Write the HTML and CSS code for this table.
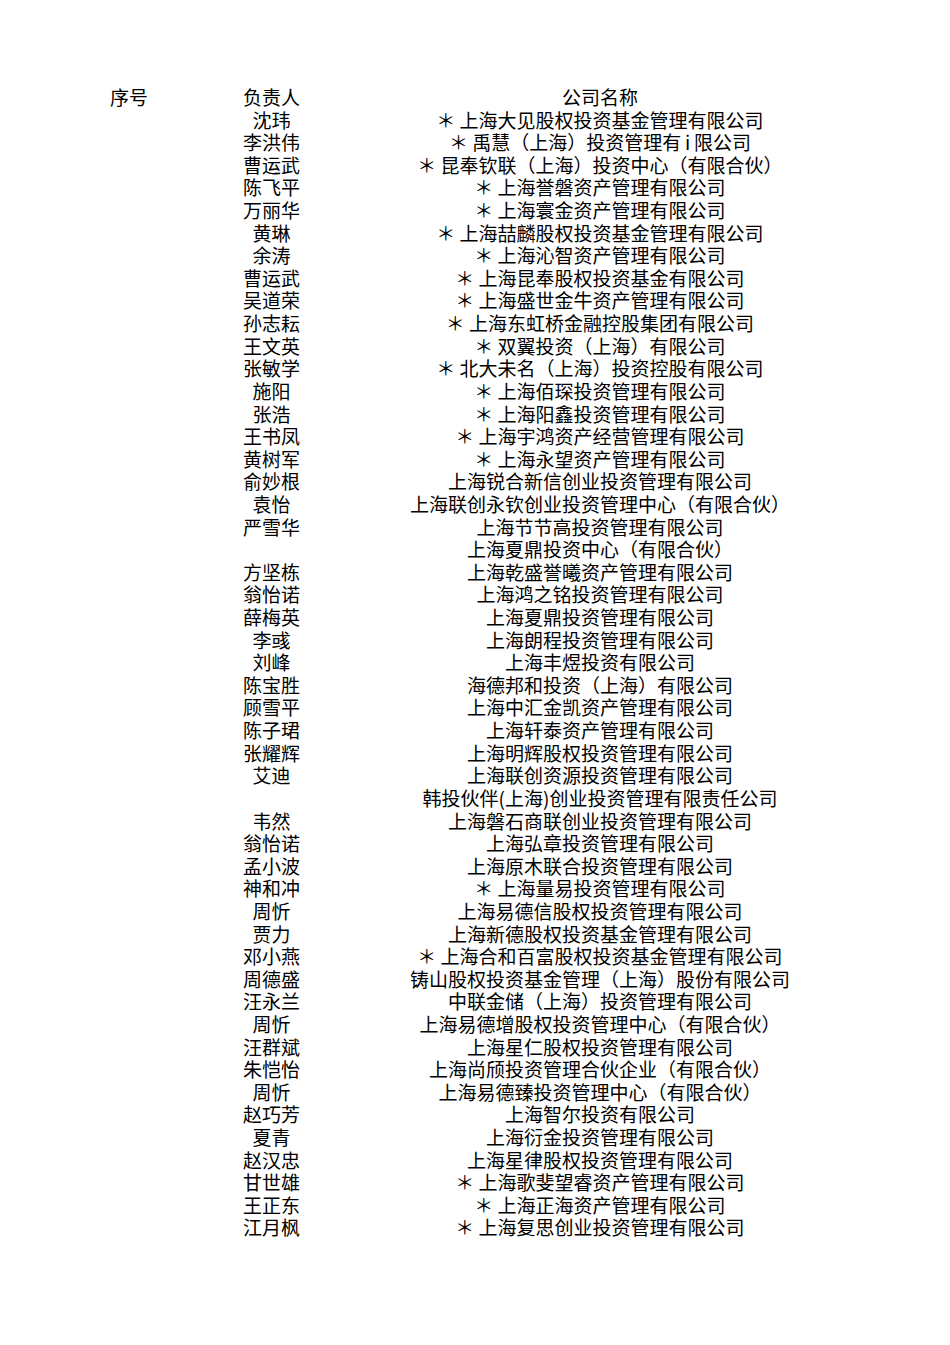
FILE: index.html
```html
<!DOCTYPE html>
<html lang="zh-CN">
<head>
<meta charset="utf-8">
<title>名单</title>
<link rel="stylesheet" href="styles.css">
</head>
<body>
<div class="sheet">
  <div class="row head"><span class="no">序号</span><span class="name">负责人</span><span class="co">公司名称</span></div>
  <div class="row"><span class="no"></span><span class="name">沈玮</span><span class="co">＊ 上海大见股权投资基金管理有限公司</span></div>
  <div class="row"><span class="no"></span><span class="name">李洪伟</span><span class="co">＊ 禹慧（上海）投资管理有&#8201;i&#8201;限公司</span></div>
  <div class="row"><span class="no"></span><span class="name">曹运武</span><span class="co">＊ 昆奉钦联（上海）投资中心（有限合伙）</span></div>
  <div class="row"><span class="no"></span><span class="name">陈飞平</span><span class="co">＊ 上海誉磐资产管理有限公司</span></div>
  <div class="row"><span class="no"></span><span class="name">万丽华</span><span class="co">＊ 上海寰金资产管理有限公司</span></div>
  <div class="row"><span class="no"></span><span class="name">黄琳</span><span class="co">＊ 上海喆麟股权投资基金管理有限公司</span></div>
  <div class="row"><span class="no"></span><span class="name">余涛</span><span class="co">＊ 上海沁智资产管理有限公司</span></div>
  <div class="row"><span class="no"></span><span class="name">曹运武</span><span class="co">＊ 上海昆奉股权投资基金有限公司</span></div>
  <div class="row"><span class="no"></span><span class="name">吴道荣</span><span class="co">＊ 上海盛世金牛资产管理有限公司</span></div>
  <div class="row"><span class="no"></span><span class="name">孙志耘</span><span class="co">＊ 上海东虹桥金融控股集团有限公司</span></div>
  <div class="row"><span class="no"></span><span class="name">王文英</span><span class="co">＊ 双翼投资（上海）有限公司</span></div>
  <div class="row"><span class="no"></span><span class="name">张敏学</span><span class="co">＊ 北大未名（上海）投资控股有限公司</span></div>
  <div class="row"><span class="no"></span><span class="name">施阳</span><span class="co">＊ 上海佰琛投资管理有限公司</span></div>
  <div class="row"><span class="no"></span><span class="name">张浩</span><span class="co">＊ 上海阳鑫投资管理有限公司</span></div>
  <div class="row"><span class="no"></span><span class="name">王书凤</span><span class="co">＊ 上海宇鸿资产经营管理有限公司</span></div>
  <div class="row"><span class="no"></span><span class="name">黄树军</span><span class="co">＊ 上海永望资产管理有限公司</span></div>
  <div class="row"><span class="no"></span><span class="name">俞妙根</span><span class="co">上海锐合新信创业投资管理有限公司</span></div>
  <div class="row"><span class="no"></span><span class="name">袁怡</span><span class="co">上海联创永钦创业投资管理中心（有限合伙）</span></div>
  <div class="row"><span class="no"></span><span class="name">严雪华</span><span class="co">上海节节高投资管理有限公司</span></div>
  <div class="row"><span class="no"></span><span class="name"></span><span class="co">上海夏鼎投资中心（有限合伙）</span></div>
  <div class="row"><span class="no"></span><span class="name">方坚栋</span><span class="co">上海乾盛誉曦资产管理有限公司</span></div>
  <div class="row"><span class="no"></span><span class="name">翁怡诺</span><span class="co">上海鸿之铭投资管理有限公司</span></div>
  <div class="row"><span class="no"></span><span class="name">薛梅英</span><span class="co">上海夏鼎投资管理有限公司</span></div>
  <div class="row"><span class="no"></span><span class="name">李彧</span><span class="co">上海朗程投资管理有限公司</span></div>
  <div class="row"><span class="no"></span><span class="name">刘峰</span><span class="co">上海丰煜投资有限公司</span></div>
  <div class="row"><span class="no"></span><span class="name">陈宝胜</span><span class="co">海德邦和投资（上海）有限公司</span></div>
  <div class="row"><span class="no"></span><span class="name">顾雪平</span><span class="co">上海中汇金凯资产管理有限公司</span></div>
  <div class="row"><span class="no"></span><span class="name">陈子珺</span><span class="co">上海轩泰资产管理有限公司</span></div>
  <div class="row"><span class="no"></span><span class="name">张耀辉</span><span class="co">上海明辉股权投资管理有限公司</span></div>
  <div class="row"><span class="no"></span><span class="name">艾迪</span><span class="co">上海联创资源投资管理有限公司</span></div>
  <div class="row"><span class="no"></span><span class="name"></span><span class="co">韩投伙伴(上海)创业投资管理有限责任公司</span></div>
  <div class="row"><span class="no"></span><span class="name">韦然</span><span class="co">上海磐石商联创业投资管理有限公司</span></div>
  <div class="row"><span class="no"></span><span class="name">翁怡诺</span><span class="co">上海弘章投资管理有限公司</span></div>
  <div class="row"><span class="no"></span><span class="name">孟小波</span><span class="co">上海原木联合投资管理有限公司</span></div>
  <div class="row"><span class="no"></span><span class="name">神和冲</span><span class="co">＊ 上海量易投资管理有限公司</span></div>
  <div class="row"><span class="no"></span><span class="name">周忻</span><span class="co">上海易德信股权投资管理有限公司</span></div>
  <div class="row"><span class="no"></span><span class="name">贾力</span><span class="co">上海新德股权投资基金管理有限公司</span></div>
  <div class="row"><span class="no"></span><span class="name">邓小燕</span><span class="co">＊ 上海合和百富股权投资基金管理有限公司</span></div>
  <div class="row"><span class="no"></span><span class="name">周德盛</span><span class="co">铸山股权投资基金管理（上海）股份有限公司</span></div>
  <div class="row"><span class="no"></span><span class="name">汪永兰</span><span class="co">中联金储（上海）投资管理有限公司</span></div>
  <div class="row"><span class="no"></span><span class="name">周忻</span><span class="co">上海易德增股权投资管理中心（有限合伙）</span></div>
  <div class="row"><span class="no"></span><span class="name">汪群斌</span><span class="co">上海星仁股权投资管理有限公司</span></div>
  <div class="row"><span class="no"></span><span class="name">朱恺怡</span><span class="co">上海尚颀投资管理合伙企业（有限合伙）</span></div>
  <div class="row"><span class="no"></span><span class="name">周忻</span><span class="co">上海易德臻投资管理中心（有限合伙）</span></div>
  <div class="row"><span class="no"></span><span class="name">赵巧芳</span><span class="co">上海智尔投资有限公司</span></div>
  <div class="row"><span class="no"></span><span class="name">夏青</span><span class="co">上海衍金投资管理有限公司</span></div>
  <div class="row"><span class="no"></span><span class="name">赵汉忠</span><span class="co">上海星律股权投资管理有限公司</span></div>
  <div class="row"><span class="no"></span><span class="name">甘世雄</span><span class="co">＊ 上海歌斐望睿资产管理有限公司</span></div>
  <div class="row"><span class="no"></span><span class="name">王正东</span><span class="co">＊ 上海正海资产管理有限公司</span></div>
  <div class="row"><span class="no"></span><span class="name">江月枫</span><span class="co">＊ 上海复思创业投资管理有限公司</span></div>
</div>
</body>
</html>
```

FILE: styles.css
```css
html, body {
  margin: 0;
  padding: 0;
  background: #ffffff;
}

body {
  font-family: "Noto Sans CJK SC", "Noto Sans", sans-serif;
  font-size: 19px;
  color: #000000;
}

.sheet {
  padding: 86px 0 0 110px;
}

.row {
  display: grid;
  grid-template-columns: 100px 123px 534px;
  height: 22.62px;
  line-height: 22.62px;
  white-space: nowrap;
}

.no {
  text-align: left;
}

.name,
.co {
  text-align: center;
}

.head .co {
  letter-spacing: 0;
}
```
